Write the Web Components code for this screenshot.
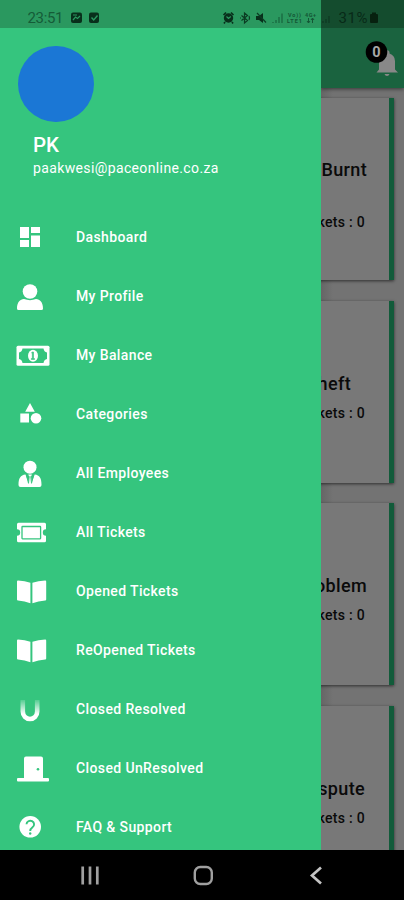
<!DOCTYPE html>
<html lang="en">
<head>
<meta charset="utf-8">
<title>Ticket menu</title>
<style>
html,body{margin:0;padding:0;background:#000}
body{width:404px;height:900px;overflow:hidden;font-family:Roboto,"Liberation Sans",sans-serif}
</style>
</head>
<body>
<phone-screen></phone-screen>
<script>
function define(name, html, setup) {
  const t = document.createElement('template');
  t.innerHTML = html;
  customElements.define(name, class extends HTMLElement {
    constructor() {
      super();
      this.attachShadow({mode: 'open'}).append(t.content.cloneNode(true));
    }
    connectedCallback() { if (setup) setup(this, this.shadowRoot); }
  });
}

const ICONS = {
  dashboard: '<path d="M20 10h9v11h-9zM31 10h9v6h-9zM20 23h9v7h-9zM31 18.500h9V30h-9z"/>',
  profile: '<circle cx="30" cy="15.500" r="7.300"/><path d="M17 32.500c0-6 3-9.500 7-9.500 4 1.500 8 1.500 12 0 4 0 7 3.500 7 9.500q0 1.500-1.500 1.500h-23Q17 34 17 32.500z"/>',
  balance: '<rect x="16.500" y="10.800" width="33" height="20" rx="1.500"/><path d="M22.500 13.500h21q.5 3.500 3.500 4v6.500q-3 .5-3.500 4h-21q-.5-3.500-3.500-4v-6.500q3-.5 3.500-4z" fill="#35c57e"/><ellipse cx="33" cy="20.800" rx="5" ry="6"/><path d="M31.500 17.800l1-.8h1v6.500h1v1h-3.200v-1h1v-5z" stroke="#35c57e" stroke-width=".6" fill="#35c57e"/>',
  categories: '<path d="M30 9l4.800 8.700h-9.600zM20.300 19.500h8.700v9h-8.700z"/><circle cx="36" cy="24.300" r="5.300"/>',
  employees: '<circle cx="30" cy="14.200" r="6.500"/><path d="M18.500 32c0-7 2-9.800 7-10.500l3 8 .7-6-1-2h3.800l-1 2 .7 6 3-8c5 .7 6.800 3.500 6.800 10.500q0 2-2 2h-19q-2 0-2-2z"/><path d="M26.300 21.800l2.200 8.500.8-7M33.700 21.800l-2.200 8.500-.8-7" fill="none" stroke="#35c57e" stroke-width=".9"/>',
  tickets: '<path d="M18.500 10.800h26q1.500 0 1.500 1.500v5a3.200 3.200 0 0 0 0 6.400v5q0 1.600-1.500 1.600h-26q-1.500 0-1.500-1.600v-5a3.200 3.200 0 0 0 0-6.400v-5q0-1.500 1.500-1.500z"/><rect x="22" y="14.500" width="18.600" height="12.300" rx=".5" fill="none" stroke="#35c57e" stroke-width="1.300"/>',
  book: '<path d="M17 10.400q0-1 1-1 7 .3 12.400 2.400v20.500q-5.500-2.400-12.400-2.800-1 0-1-1zM46.200 10.400q0-1-1-1-7 .3-12.800 2.400v20.500q5.800-2.400 12.800-2.800 1 0 1-1z"/>',
  magnet: '<defs><linearGradient id="g" x1="0" y1="10" x2="0" y2="25" gradientUnits="userSpaceOnUse"><stop offset="0" stop-color="#fff" stop-opacity=".1"/><stop offset="1" stop-color="#fff"/></linearGradient></defs><path d="M22.800 11v11.500a7.200 7.500 0 0 0 14.400 0V11" fill="none" stroke="url(#g)" stroke-width="4.600"/>',
  door: '<path d="M24 10.500q0-2 2-2h15q2 0 2 2V30h5q1 0 1 1v1.500q0 1-1 1H18q-1 0-1-1V31q0-1 1-1h6z"/><circle cx="38" cy="21.300" r="1.300" fill="#35c57e"/>',
  help: '<circle cx="30.200" cy="19.800" r="10.800"/><path d="M26.500 17.300a3.800 3.600 0 1 1 6 3q-2.300 1.700-2.300 3.700" fill="none" stroke="#35c57e" stroke-width="1.900"/><circle cx="30.200" cy="26.500" r="1.200" fill="#35c57e"/>'
};

define('menu-item', `<style>
:host{display:flex;flex:none;align-items:center;height:59.080px;color:#fff;font-size:14px;font-weight:500;line-height:20px;letter-spacing:.38px}
svg{width:60px;height:40px;flex:none;fill:#fff;margin-right:16px}
</style><svg viewBox="0 0 60 40"></svg><slot></slot>`,
(el, root) => { root.querySelector('svg').innerHTML = ICONS[el.getAttribute('icon')]; });

define('user-header', `<style>
:host{display:block;flex:none;height:179px;box-sizing:border-box;padding:17.500px 0 0 18px;color:#fff}
.avatar{width:75.500px;height:76.500px;border-radius:50%;background:#1b77d5}
.name{margin:11px 0 0 15px;font-size:20.500px;font-weight:500;line-height:24px}
.mail{margin:1px 0 0 15px;font-size:14px;line-height:20px;letter-spacing:.37px}
</style><div class="avatar"></div><div class="name"><slot name="name"></slot></div><div class="mail"><slot name="mail"></slot></div>`);

define('nav-drawer', `<style>
:host{display:flex;flex-direction:column;background:#35c57e;width:320.500px;height:822px;overflow:hidden}
</style><slot></slot>`);

define('status-bar', `<style>
:host{display:grid;grid-template-columns:320.500px 1fr;height:28px;background:linear-gradient(90deg,#2a985f 320.500px,#144c2e 320.500px);color:#17613b}
svg{grid-area:1/1/2/3;width:404px;height:28px}
.t{font-family:Roboto,sans-serif;font-size:15px}
</style><svg viewBox="0 0 404 28" fill="#082f1b">
<text class="t" x="27.500" y="23" fill="#155c38" textLength="36">23:51</text>
<rect x="71" y="12.500" width="11" height="10.500" rx="2"/><path d="M73 20l2.500-3 2 1.500 2.500-2.500M73 15h4" fill="none" stroke="#2a985f" stroke-width="1.200"/>
<rect x="89" y="12.500" width="10" height="10.500" rx="2"/><path d="M91.500 17.500l2.200 2.500 3.800-4.500" fill="none" stroke="#2a985f" stroke-width="1.400"/>
<circle cx="228.500" cy="18" r="4.700"/><path d="M223.500 15l2.500-2.500M233.500 15l-2.500-2.500M225 22l-1 1.500M232 22l1 1.500" stroke="#082f1b" stroke-width="1.600"/><path d="M226.500 16.500l2 2 2.300-2" fill="none" stroke="#2a985f" stroke-width="1.200"/>
<path d="M241.500 15.500l6 5-3 2.500v-10l3 2.500-6 5M240 18h1M249 16q1 2 0 4" fill="none" stroke="#0b3c23" stroke-width="1.200"/>
<path d="M256 16h3l4-3v10l-4-3h-3z"/><path d="M257 13l9 9.500" stroke="#0b3c23" stroke-width="1.200"/>
<path d="M273 22v1M276 20v3M279 17v6M282 13.500V23" stroke="#19683f" stroke-width="1.300"/>
<g fill="#145635" font-family="Roboto" font-size="5.500" font-weight="700"><text x="288" y="17" textLength="13">Vo))</text><text x="287" y="23" textLength="15">LTE1</text><text x="305" y="17" textLength="11">4G+</text></g>
<path d="M308.500 18v5m-1.500-2l1.500 2 1.500-2M312.500 23v-5m-1.500 2l1.500-2 1.500 2" fill="none" stroke="#145635" stroke-width="1"/>
<path d="M323 21v2M326 19v4M329 16v7" stroke="#0e3822" stroke-width="1.200"/>
<text class="t" x="338.500" y="23" fill="#082a18" textLength="29">31%</text>
<rect x="370" y="14" width="8" height="9" rx="1" fill="#07210f"/><rect x="372" y="12.500" width="4" height="2" fill="#07210f"/>
</svg>`);

define('top-bar', `<style>
:host{display:block;height:59.500px;background:#1a633f;box-shadow:0 1px 4px #0008;z-index:1}
svg{display:block;width:83.500px;height:59.500px}
</style><svg viewBox="320.500 28 83.500 59.500">
<path d="M376 72.500l2.500-3V61q0-5.500 5.500-7.500V52q0-1.700 2.500-1.700T389 52v1.500q5.500 2 5.500 7.500v8.500l3 3z" fill="#888"/><path d="M384 74h5q-.7 2-2.500 2t-2.500-2z" fill="#888"/>
<circle cx="376" cy="52" r="10.800" fill="#000"/><text x="376" y="57.200" text-anchor="middle" fill="#a7a7a7" font-family="Roboto" font-weight="700" font-size="14.500">0</text></svg>`);

define('ticket-card', `<style>
:host{display:flex;flex-direction:column;align-items:flex-end;flex:none;height:182px;box-sizing:border-box;margin:0 10px 20.500px -120px;background:#787878;border-right:5px solid #125b3a;box-shadow:0 1px 3px #0009;color:#0a0a0a;font-weight:500;white-space:nowrap}
.title{margin-top:var(--title-top,71px);margin-right:var(--title-gap,22px);font-size:18px;line-height:24px;letter-spacing:.35px}
.count{margin-top:var(--count-gap,7px);margin-right:24px;font-size:14px;line-height:20px;letter-spacing:.3px}
</style><div class="title"><slot></slot></div><div class="count"><slot name="count"></slot></div>`);

define('ticket-page', `<style>
:host{display:flex;flex-direction:column;width:83.500px;height:822px;overflow:hidden;background:#737373}
.list{display:flex;flex-direction:column;padding-top:10.800px;overflow:hidden;flex:1;background:linear-gradient(90deg,#666,#737373 12px)}
</style><top-bar></top-bar><div class="list"><slot></slot></div>`);

define('nav-bar', `<style>
:host{display:block;height:50px;background:#000}
svg{display:block}
</style><svg width="404" height="50" fill="none" stroke="#a0a0a0"><path d="M82.700 16.500v18M90 16.500v18M97.300 16.500v18" stroke-width="2.700"/><rect x="194.800" y="17" width="17" height="17" rx="5.500" stroke-width="2.400"/><path d="M321 17.500l-9 8 9 8" stroke="#c4c4c4" stroke-width="2.700"/></svg>`);

define('phone-screen', `<style>
:host{display:grid;grid-template:28px 822px 50px / 320.500px 83.500px;width:404px;height:900px;overflow:hidden}
status-bar,nav-bar{grid-column:1/3}
</style>
<status-bar></status-bar>
<nav-drawer>
<user-header><span slot="name">PK</span><span slot="mail">paakwesi@paceonline.co.za</span></user-header>
<menu-item icon="dashboard">Dashboard</menu-item>
<menu-item icon="profile">My Profile</menu-item>
<menu-item icon="balance">My Balance</menu-item>
<menu-item icon="categories">Categories</menu-item>
<menu-item icon="employees">All Employees</menu-item>
<menu-item icon="tickets">All Tickets</menu-item>
<menu-item icon="book">Opened Tickets</menu-item>
<menu-item icon="book">ReOpened Tickets</menu-item>
<menu-item icon="magnet">Closed Resolved</menu-item>
<menu-item icon="door">Closed UnResolved</menu-item>
<menu-item icon="help">FAQ &amp; Support</menu-item>
</nav-drawer>
<ticket-page>
<ticket-card style="--title-top:60px;--count-gap:30px">Burnt<span slot="count">Tickets : 0</span></ticket-card>
<ticket-card style="--title-gap:38px">Theft<span slot="count">Tickets : 0</span></ticket-card>
<ticket-card style="--title-gap:22px">Problem<span slot="count">Tickets : 0</span></ticket-card>
<ticket-card style="--title-gap:24px">Dispute<span slot="count">Tickets : 0</span></ticket-card>
</ticket-page>
<nav-bar></nav-bar>`);
</script>
</body>
</html>
